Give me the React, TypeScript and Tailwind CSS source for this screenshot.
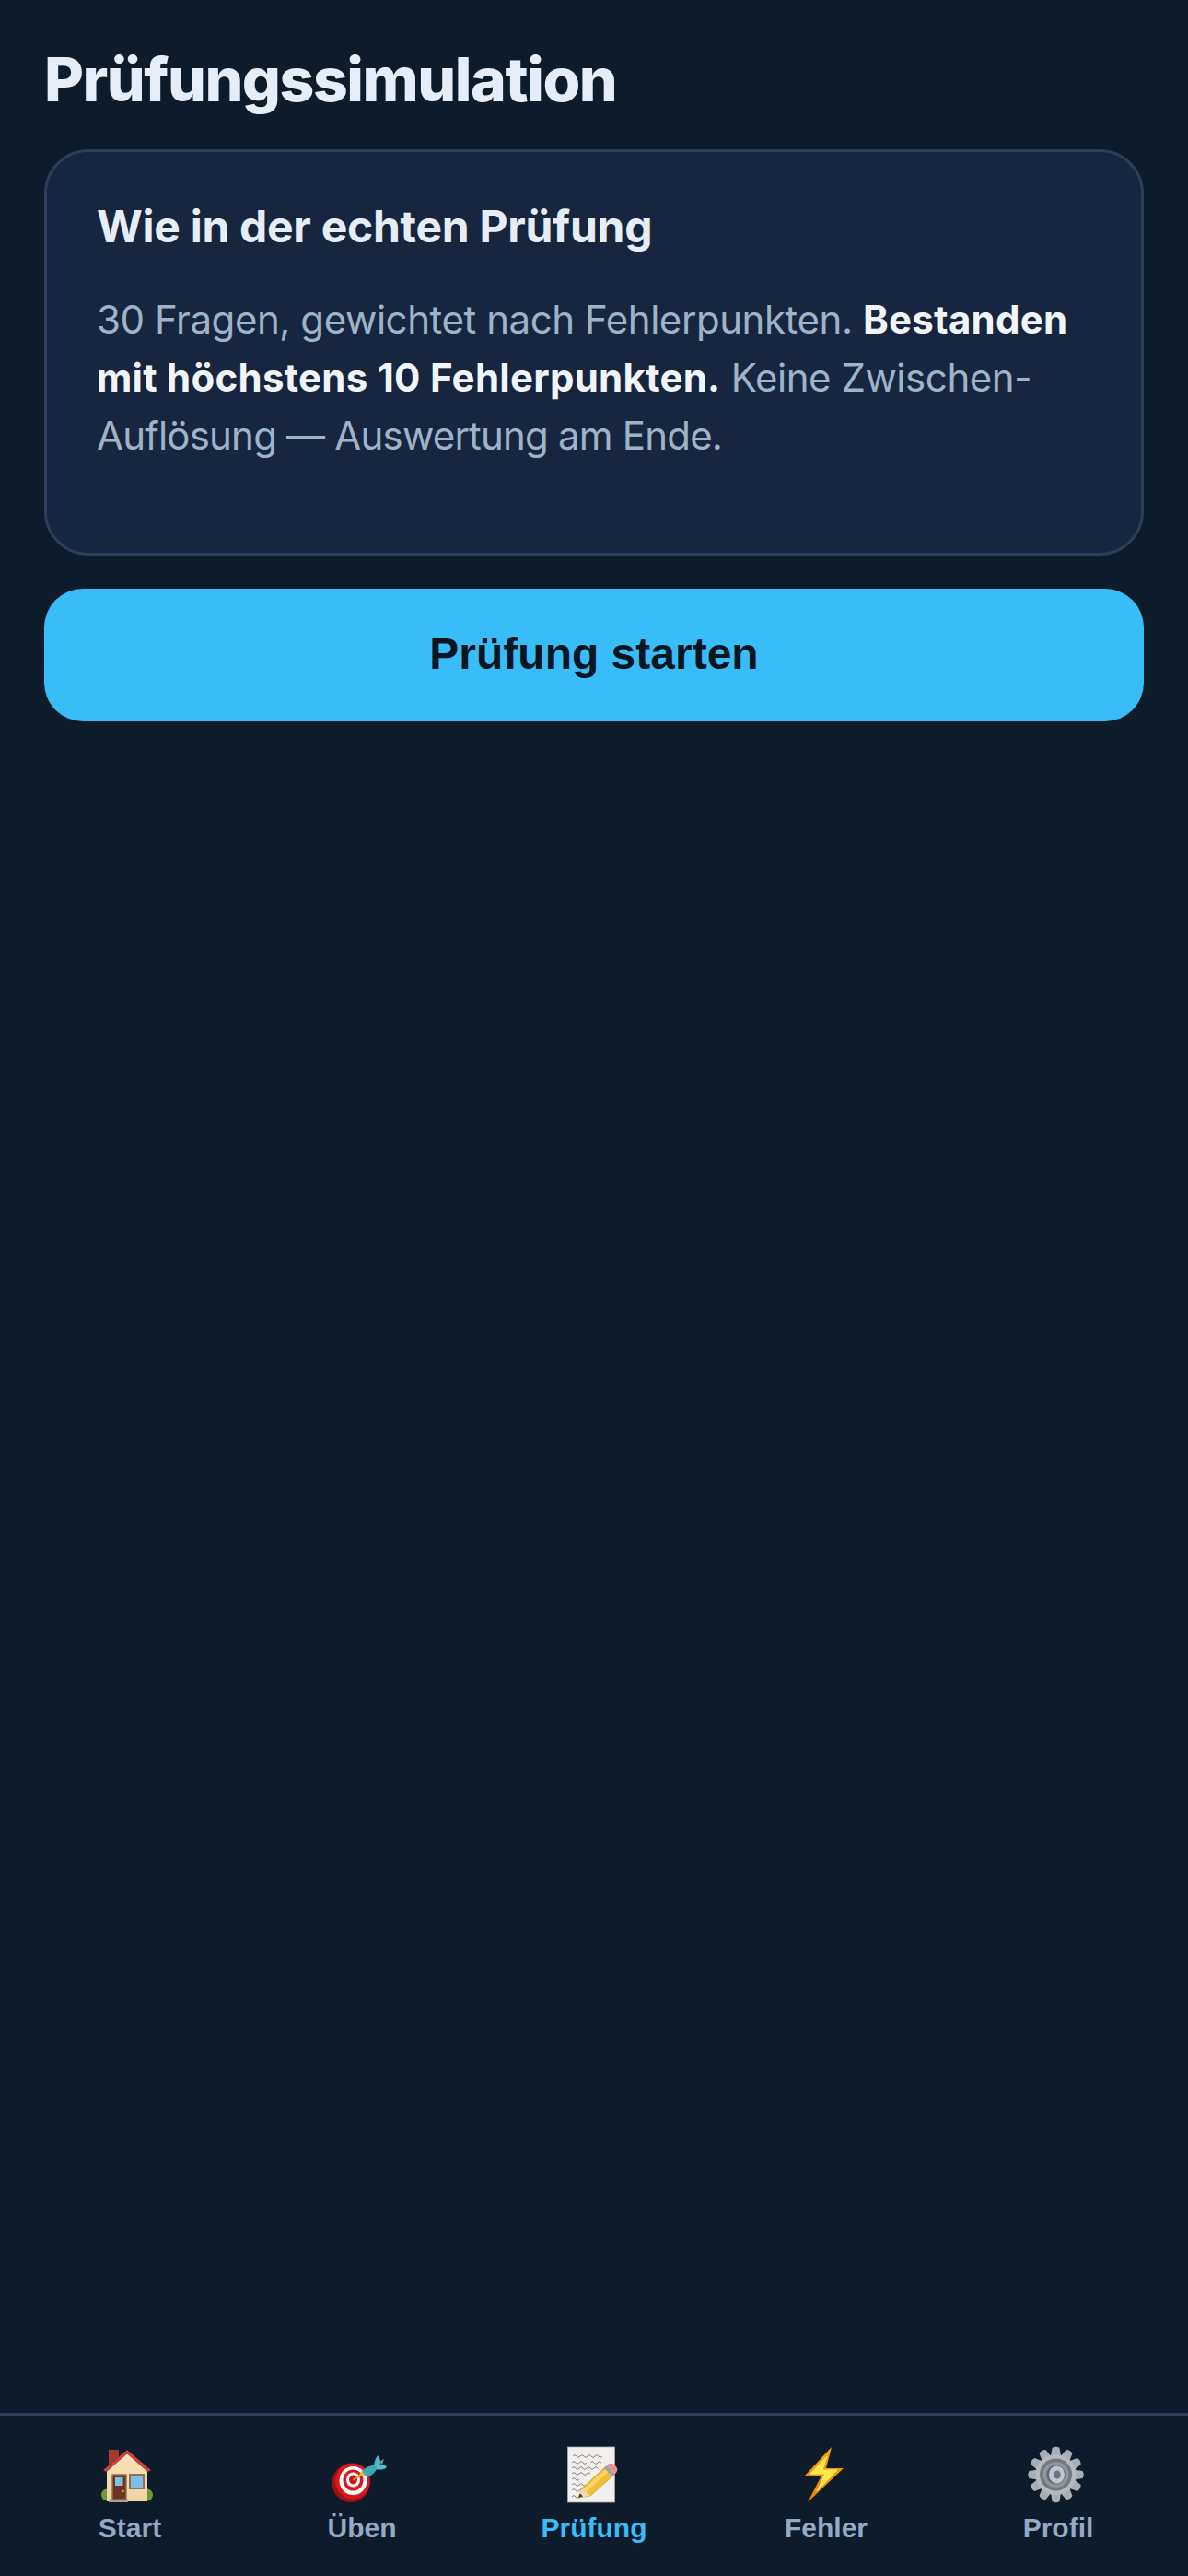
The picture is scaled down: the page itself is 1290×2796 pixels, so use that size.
import React from 'react';

const HomeIcon = () => (
    <svg viewBox="0 0 66 66" className="w-[66px] h-[66px]">
        <defs>
            <linearGradient id="wall" x1="0" y1="0" x2="0" y2="1">
                <stop offset="0" stopColor="#fbe3bb" />
                <stop offset="1" stopColor="#efd3a3" />
            </linearGradient>
        </defs>
        <ellipse cx="8" cy="55" rx="6" ry="6.5" fill="#6d9a34" />
        <ellipse cx="52" cy="55" rx="6" ry="6.5" fill="#6d9a34" />
        <rect x="10" y="6" width="11" height="18" fill="#a53a2e" />
        <path d="M8 28 L30 7 L52 28 L52 62 L8 62 Z" fill="url(#wall)" />
        <path d="M4 28 L30 6 L56 28 L53 30 L30 10 L7 30 Z" fill="#d8403a" stroke="#3a2a2a" strokeWidth="0.6" />
        <rect x="14" y="33" width="15" height="27" fill="#6e3423" stroke="#8d7056" strokeWidth="1.5" />
        <rect x="17" y="36" width="8.5" height="9" fill="#80c2e6" />
        <circle cx="25.5" cy="51" r="1.2" fill="#eab82e" />
        <rect x="33" y="33" width="15" height="15" fill="#7dbde6" stroke="#8d7056" strokeWidth="2" />
        <rect x="10" y="60" width="21" height="3" fill="#a8a096" />
    </svg>
);

const TargetIcon = () => (
    <svg viewBox="0 0 66 66" className="w-[66px] h-[66px]">
        <ellipse cx="21" cy="42" rx="20.5" ry="21" fill="#9d1216" />
        <ellipse cx="23" cy="40" rx="19" ry="19.5" fill="#d8181d" />
        <ellipse cx="23.5" cy="39.5" rx="15" ry="15.5" fill="#fff" />
        <ellipse cx="23.5" cy="39" rx="11" ry="11.5" fill="#d8181d" />
        <ellipse cx="23.5" cy="38.5" rx="7.5" ry="8" fill="#fff" />
        <ellipse cx="23.5" cy="38.5" rx="4.5" ry="5" fill="#c8161b" />
        <path d="M23.5 38.5 L33 33" stroke="#c9a227" strokeWidth="1.5" />
        <path d="M29 35 L33 28.5 L37 34 Z" fill="#efc02e" />
        <path d="M33 29 C38 24 44 22 49 23 C50 28 46 33 38 36 Z" fill="#3fa9b8" />
        <path d="M46 24 C46 19 48 15 50 12 C53 15 54 20 52 24 Z" fill="#4cb8c6" />
        <path d="M49 23 C53 21 58 21 60 25 C57 28 52 28 48 27 Z" fill="#55bccb" />
        <path d="M52 19 L57 16 L55 22 Z" fill="#7a9ba3" />
    </svg>
);

const ExamIcon = () => (
    <svg viewBox="0 0 66 66" className="w-[66px] h-[66px]">
        <rect x="4.5" y="3" width="51" height="60" fill="#f2f0ec" stroke="#a9a9a6" strokeWidth="0.8" />
        <g fill="none" stroke="#3b3b3b" strokeWidth="0.6">
            <path d="M10 13 q2 -3 4 0 t4 0 t4 0 t4 0 t4 0 t4 0 t4 0 t4 0" />
            <path d="M9 20 q2 -3 4 0 t4 0 t4 0 t4 0 M29 20 q2 -3 4 0 t4 0 t4 0" />
            <path d="M9 26 q2 -3 4 0 t4 0 t4 0 t4 0 t4 0 t4 0 t4 0" />
            <path d="M9 32 q2 -3 4 0 t4 0 t4 0 t4 0 t4 0" />
            <path d="M9 38 q2 -3 4 0 t4 0" />
            <path d="M9 44 q2 -3 4 0 t4 0 t4 0 t4 0" />
            <path d="M9 50 q2 -3 4 0 t4 0 t4 0" />
            <path d="M9 57 q2 -3 4 0 t4 0" />
        </g>
        <path d="M16 58 L20 48 L46 24 L55 33 L29 56 Z" fill="#f3be37" stroke="#b98a22" strokeWidth="0.6" />
        <path d="M21 49 L47 26 L50 29 L24 52 Z" fill="#f9d665" />
        <path d="M16 58 L20 48 L29 56 Z" fill="#eed9ae" />
        <path d="M16 58 L17.7 53.5 L21 56.5 Z" fill="#2f2f2f" />
        <path d="M44 26 L47 23 L56 32 L53 35 Z" fill="#9da3a8" />
        <path d="M47 23 C49 20 53 20 56 23 C59 26 59 29 56 32 Z" fill="#ec8f90" />
    </svg>
);

const BoltIcon = () => (
    <svg viewBox="0 0 66 66" className="w-[66px] h-[66px]">
        <defs>
            <linearGradient id="bolt" x1="0" y1="0" x2="0" y2="1">
                <stop offset="0" stopColor="#ffab00" />
                <stop offset="1" stopColor="#e87f00" />
            </linearGradient>
        </defs>
        <path d="M39 3 L10 34 L28 34 L13 63 L52 26 L33 26 Z" fill="url(#bolt)" />
        <path d="M34 13 L16 32 L32 32 L23 51 L45 28 L29 28 Z" fill="#ffe93b" stroke="#fff6c8" strokeWidth="0.8" />
    </svg>
);

const GearIcon = () => {
    const teeth = Array.from({ length: 12 }, (_, i) => i * 30);
    return (
        <svg viewBox="0 0 66 66" className="w-[66px] h-[66px]">
            <g fill="#a9aeb5">
                {teeth.map((deg) => (
                    <path key={deg} d="M26.5 4 Q30.5 1.5 34.5 4 L36 13 L25 13 Z" transform={`rotate(${deg} 30.5 33)`} />
                ))}
            </g>
            <circle cx="30.5" cy="33" r="22" fill="#b5bac1" />
            <circle cx="30.5" cy="33" r="17.5" fill="#73777e" />
            <circle cx="30.5" cy="33" r="14" fill="#92969c" />
            <circle cx="30.5" cy="33" r="10.5" fill="#686c72" />
            <ellipse cx="31.5" cy="33" rx="8.5" ry="9.5" fill="#bcc7d3" />
            <ellipse cx="32" cy="33" rx="3.8" ry="4.6" fill="#6f747b" />
        </svg>
    );
};

const NavItem = ({ icon, label, active }: { icon: React.ReactNode; label: string; active?: boolean }) => (
    <button className="flex-1 flex flex-col items-center gap-2">
        {icon}
        <span className={`text-[30px] leading-[34px] font-bold ${active ? 'text-[#38bdf8]' : 'text-[#94a9c3]'}`}>{label}</span>
    </button>
);

const App: React.FC = () => {
    return (
        <div className="min-h-[2796px] flex flex-col bg-[#0d1b2a] font-['Liberation_Sans',sans-serif]">
            <main className="flex-1 flex flex-col px-12 pt-[46px]">
                <h1 className="font-['Inter',sans-serif] text-[66px] leading-[80px] font-extrabold text-[#e6edf7] tracking-[-1.45px]">Prüfungssimulation</h1>
                <section className="mt-[36px] h-[441px] px-[54px] pt-[52px] bg-[#17263e] border-[3px] border-[#2c3f5a] rounded-[48px] font-['Inter',sans-serif]">
                    <h3 className="text-[48px] leading-[58px] font-bold text-[#e6edf7] tracking-[-0.28px]">Wie in der echten Prüfung</h3>
                    <p className="mt-[40px] text-[42px] leading-[63px] text-[#9fb3c8] tracking-[-0.44px]">
                        30 Fragen, gewichtet nach Fehlerpunkten. <strong className="font-bold text-[#f1f5f9] tracking-[0.27px]">Bestanden mit höchstens 10 Fehlerpunkten.</strong> Keine Zwischen-<span className="tracking-[-0.8px]">Auflösung — Auswertung am Ende.</span>
                    </p>
                </section>
                <button className="mt-9 h-[144px] pb-0.5 rounded-[42px] bg-[#38bdf8] text-[48px] font-bold text-[#0a1522]">Prüfung starten</button>
            </main>
            <nav className="flex px-[15px] pt-[31px] h-[177px] border-t-[3px] border-[#2c3f5a]">
                <NavItem icon={<HomeIcon />} label="Start" />
                <NavItem icon={<TargetIcon />} label="Üben" />
                <NavItem icon={<ExamIcon />} label="Prüfung" active />
                <NavItem icon={<BoltIcon />} label="Fehler" />
                <NavItem icon={<GearIcon />} label="Profil" />
            </nav>
        </div>
    );
};

export default App;
